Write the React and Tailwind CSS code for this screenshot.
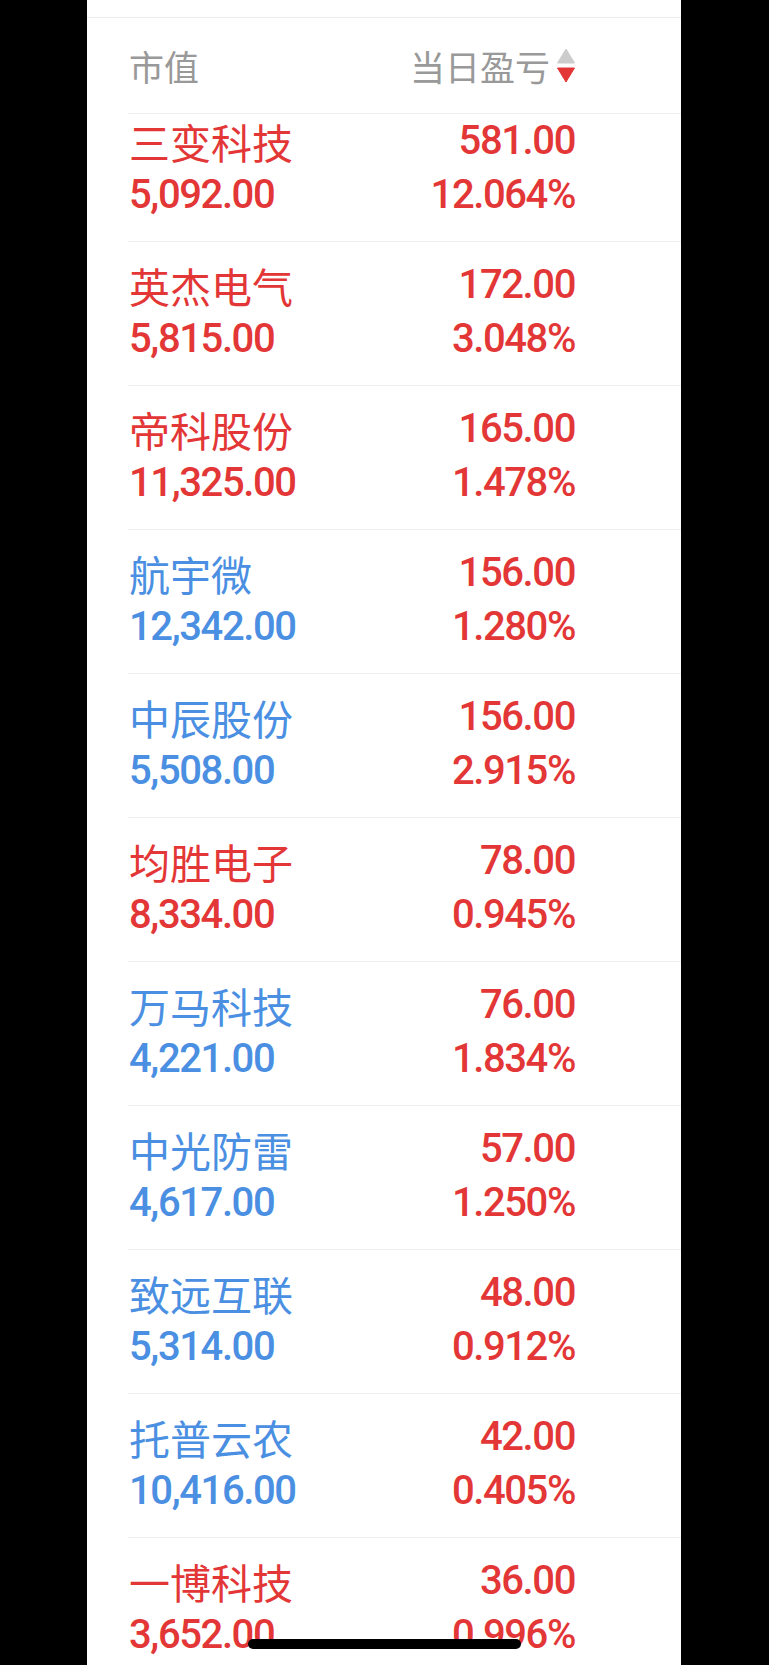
import React from "react";

const rows = [
  { name: "三变科技", mv: "5,092.00", pl: "581.00", pct: "12.064%", up: true },
  { name: "英杰电气", mv: "5,815.00", pl: "172.00", pct: "3.048%", up: true },
  { name: "帝科股份", mv: "11,325.00", pl: "165.00", pct: "1.478%", up: true },
  { name: "航宇微", mv: "12,342.00", pl: "156.00", pct: "1.280%", up: false },
  { name: "中辰股份", mv: "5,508.00", pl: "156.00", pct: "2.915%", up: false },
  { name: "均胜电子", mv: "8,334.00", pl: "78.00", pct: "0.945%", up: true },
  { name: "万马科技", mv: "4,221.00", pl: "76.00", pct: "1.834%", up: false },
  { name: "中光防雷", mv: "4,617.00", pl: "57.00", pct: "1.250%", up: false },
  { name: "致远互联", mv: "5,314.00", pl: "48.00", pct: "0.912%", up: false },
  { name: "托普云农", mv: "10,416.00", pl: "42.00", pct: "0.405%", up: false },
  { name: "一博科技", mv: "3,652.00", pl: "36.00", pct: "0.996%", up: true },
];

function Row({ r, first }) {
  const color = r.up ? "text-[#e33636]" : "text-[#4a8fe2]";
  return (
    <div
      className={
        "flex justify-between border-b border-[#efefef] pr-[106px] pl-[1px] " +
        (first ? "h-[128px] pt-0" : "h-[144px] pt-[16px]")
      }
    >
      <div className={"flex flex-col " + color}>
        <div className="font-['Noto_Sans_CJK_SC',sans-serif] text-[41px] leading-[54px]">
          {r.name}
        </div>
        <div className="font-['Roboto',sans-serif] font-medium text-[40px] leading-[54px] tracking-[-1.4px]">
          {r.mv}
        </div>
      </div>
      <div className="flex flex-col items-end text-[#e33636] font-['Roboto',sans-serif] font-medium text-[40px] leading-[54px] tracking-[-1.4px]">
        <div>{r.pl}</div>
        <div>{r.pct}</div>
      </div>
    </div>
  );
}

export default function App() {
  return (
    <div className="relative w-[769px] h-[1665px] bg-black overflow-hidden">
      <div className="ml-[87px] w-[594px] h-full bg-white">
        <div className="h-[18px] border-b border-[#ececec]" />
        <div className="ml-[41px]">
          <div className="flex h-[96px] items-center justify-between border-b border-[#efefef] pl-[1px] pr-[106px] font-['Noto_Sans_CJK_SC',sans-serif] text-[35px] leading-[40px] text-[#999999]">
            <span>市值</span>
            <div className="flex items-center">
              <span>当日盈亏</span>
              <svg width="18" height="36" viewBox="0 0 18 36" className="ml-[7px]">
                <path d="M9 1 L17.5 15 L0.5 15 Z" fill="#cccccc" stroke="#cccccc" strokeWidth="1" strokeLinejoin="round" />
                <path d="M0.5 20 L17.5 20 L9 34 Z" fill="#e33636" stroke="#e33636" strokeWidth="1" strokeLinejoin="round" />
              </svg>
            </div>
          </div>
          {rows.map((r, i) => (
            <Row key={r.name} r={r} first={i === 0} />
          ))}
        </div>
      </div>
      <div className="absolute left-[248px] top-[1639px] h-[10px] w-[273px] rounded-full bg-black" />
    </div>
  );
}
